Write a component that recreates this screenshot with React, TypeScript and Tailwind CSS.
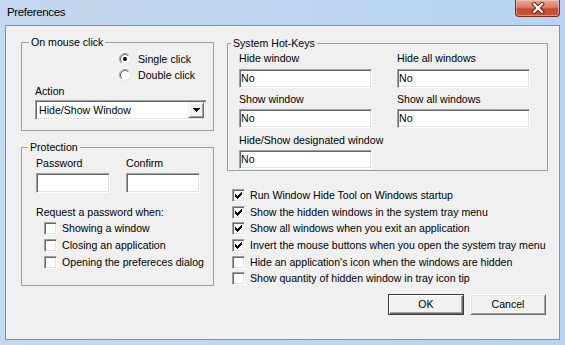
import React from "react";

const sunken =
  "bg-white border border-t-[#a0a0a0] border-l-[#a0a0a0] border-b-white border-r-white shadow-[inset_1px_1px_0_#696969,inset_-1px_-1px_0_#e3e3e3]";

function Check({ checked }: { checked?: boolean }) {
  return (
    <span className={`w-[13px] h-[13px] shrink-0 flex items-center justify-center ${sunken}`}>
      {checked && (
        <svg width="7" height="7" viewBox="0 0 7 7" shapeRendering="crispEdges">
          <path
            d="M6 0h1v1h-1z M5 1h2v1h-2z M0 2h1v1h-1z M4 2h3v1h-3z M0 3h2v1h-2z M3 3h3v1h-3z M0 4h5v1h-5z M1 5h3v1h-3z M2 6h1v1h-1z"
            fill="#000"
          />
        </svg>
      )}
    </span>
  );
}

function Radio({ checked }: { checked?: boolean }) {
  return (
    <svg width="12" height="12" viewBox="0 0 12 12" className="shrink-0">
      <circle cx="6" cy="6" r="5.5" fill="#fff" stroke="#e3e3e3" />
      <path d="M2.11 9.89 A5.5 5.5 0 0 1 9.89 2.11" stroke="#a0a0a0" fill="none" />
      <path d="M2.82 9.18 A4.5 4.5 0 0 1 9.18 2.82" stroke="#696969" fill="none" />
      {checked && <circle cx="6" cy="6" r="2" fill="#000" />}
    </svg>
  );
}

function CheckRow({ checked, label, h }: { checked?: boolean; label: string; h: string }) {
  return (
    <div className={`flex items-center gap-[5px] ${h}`}>
      <Check checked={checked} />
      <span className="whitespace-nowrap">{label}</span>
    </div>
  );
}

function HotInput() {
  return (
    <div className={`h-[19px] w-[133px] flex items-center pl-[1px] ${sunken}`}>
      <span>No</span>
    </div>
  );
}

function Button({ label, isDefault }: { label: string; isDefault?: boolean }) {
  return (
    <div
      className={
        isDefault
          ? "w-[76px] h-[21px] flex items-center justify-center bg-[#f0f0f0] border border-[#3c3c3c] shadow-[inset_1px_1px_0_#fff,inset_-1px_-1px_0_#696969,inset_-2px_-2px_0_#a0a0a0]"
          : "w-[76px] h-[21px] flex items-center justify-center bg-[#f0f0f0] border border-t-white border-l-white border-b-[#696969] border-r-[#696969] shadow-[inset_1px_1px_0_#e3e3e3,inset_-1px_-1px_0_#a0a0a0]"
      }
    >
      {label}
    </div>
  );
}

function CloseButton() {
  return (
    <div className="mr-[5px] w-[45px] h-[17px] rounded-b-[4px] border border-t-0 border-[#7e2b1c] bg-[linear-gradient(180deg,#e8a797_0%,#d9806b_45%,#c84a31_55%,#c9553a_100%)] shadow-[inset_0_0_0_1px_rgba(255,220,210,0.45)] flex items-center justify-center">
      <svg width="14" height="12" viewBox="0 0 14 12">
        <path d="M3 2 L11 10 M11 2 L3 10" stroke="#5a1d12" strokeWidth="4" strokeLinecap="square" />
        <path d="M3 2 L11 10 M11 2 L3 10" stroke="#fff" strokeWidth="2.2" strokeLinecap="square" />
      </svg>
    </div>
  );
}

export default function App() {
  return (
    <div className="w-[565px] h-[345px] overflow-hidden flex flex-col bg-[linear-gradient(90deg,#c4d9ef_0%,#bed7f1_45%,#b6d3f3_100%)] font-['Liberation_Sans',Arial,sans-serif] text-[10.6px] leading-[13px] text-black">
      <div className="h-[25px] shrink-0 flex items-start justify-between">
        <span className="ml-[7px] mt-[5px] font-['Liberation_Sans',Arial,sans-serif] text-[11.5px] tracking-[-0.35px] leading-[14px]">
          Preferences
        </span>
        <CloseButton />
      </div>

      <div className="mx-[5px] h-[315px] shrink-0 border border-[#7d93ab] bg-[#f0f0f0] flex pl-[15px]">
        {/* Left column */}
        <div className="w-[193px] flex flex-col">
          <fieldset className="mt-[10px] h-[95px] border border-[#a0a0a0]">
            <legend className="ml-[7px] px-[2px] leading-[13px]">On mouse click</legend>
            <div className="pt-[2px] pl-[97px]">
              <div className="h-[16px] flex items-center gap-[7px]">
                <Radio checked />
                <span>Single click</span>
              </div>
              <div className="h-[16px] flex items-center gap-[7px]">
                <Radio />
                <span>Double click</span>
              </div>
            </div>
            <div className="pl-[13px]">
              <div className="h-[16px] flex items-center">Action</div>
              <div className={`mt-[1px] w-[172px] h-[20px] flex items-center justify-between pl-[3px] pr-[2px] ${sunken}`}>
                <span>Hide/Show Window</span>
                <div className="w-[16px] h-[16px] bg-[#f0f0f0] border border-t-[#f0f0f0] border-l-[#f0f0f0] border-b-[#696969] border-r-[#696969] shadow-[inset_1px_1px_0_#fff,inset_-1px_-1px_0_#a0a0a0] flex items-center justify-center">
                  <svg width="7" height="4" viewBox="0 0 7 4" shapeRendering="crispEdges">
                    <path d="M0 0h7v1h-7z M1 1h5v1h-5z M2 2h3v1h-3z M3 3h1v1h-1z" fill="#000" />
                  </svg>
                </div>
              </div>
            </div>
          </fieldset>

          <fieldset className="mt-[10px] h-[145px] border border-[#a0a0a0]">
            <legend className="ml-[6px] px-[2px] leading-[13px]">Protection</legend>
            <div className="flex gap-[16px] pl-[14px] pt-[1px]">
              <div className="w-[74px] flex flex-col">
                <div className="h-[16px] flex items-center">Password</div>
                <div className={`mt-[2px] h-[20px] ${sunken}`} />
              </div>
              <div className="w-[74px] flex flex-col">
                <div className="h-[16px] flex items-center">Confirm</div>
                <div className={`mt-[2px] h-[20px] ${sunken}`} />
              </div>
            </div>
            <div className="mt-[11px] h-[16px] pl-[14px] flex items-center">Request a password when:</div>
            <div className="pl-[22px]">
              <CheckRow h="h-[17px]" label="Showing a window" />
              <CheckRow h="h-[17px]" label="Closing an application" />
              <CheckRow h="h-[17px]" label="Opening the prefereces dialog" />
            </div>
          </fieldset>
        </div>

        {/* Right column */}
        <div className="ml-[13px] w-[321px] flex flex-col">
          <fieldset className="mt-[11px] h-[134px] border border-[#a0a0a0]">
            <legend className="ml-[3px] px-[2px] leading-[13px]">System Hot-Keys</legend>
            <div className="pl-[11px] flex gap-[25px]">
              <div className="w-[133px] flex flex-col">
                <div className="h-[16px] flex items-center">Hide window</div>
                <div className="mt-[3px]"><HotInput /></div>
                <div className="mt-[3px] h-[16px] flex items-center">Show window</div>
                <div className="mt-[2px]"><HotInput /></div>
                <div className="mt-[4px] h-[16px] flex items-center whitespace-nowrap">Hide/Show designated window</div>
                <div className="mt-[2px]"><HotInput /></div>
              </div>
              <div className="w-[133px] flex flex-col">
                <div className="h-[16px] flex items-center">Hide all windows</div>
                <div className="mt-[3px]"><HotInput /></div>
                <div className="mt-[3px] h-[16px] flex items-center">Show all windows</div>
                <div className="mt-[2px]"><HotInput /></div>
              </div>
            </div>
          </fieldset>

          <div className="mt-[16px] pl-[5px]">
            <CheckRow h="h-[16.7px]" checked label="Run Window Hide Tool on Windows startup" />
            <CheckRow h="h-[16.7px]" checked label="Show the hidden windows in the system tray menu" />
            <CheckRow h="h-[16.7px]" checked label="Show all windows when you exit an application" />
            <CheckRow h="h-[16.7px]" checked label="Invert the mouse buttons when you open the system tray menu" />
            <CheckRow h="h-[16.7px]" label="Hide an application's icon when the windows are hidden" />
            <CheckRow h="h-[16.7px]" label="Show quantity of hidden window in tray icon tip" />
          </div>

          <div className="mt-[7px] pr-[2px] flex justify-end gap-[6px]">
            <Button label="OK" isDefault />
            <Button label="Cancel" />
          </div>
        </div>
      </div>
    </div>
  );
}
